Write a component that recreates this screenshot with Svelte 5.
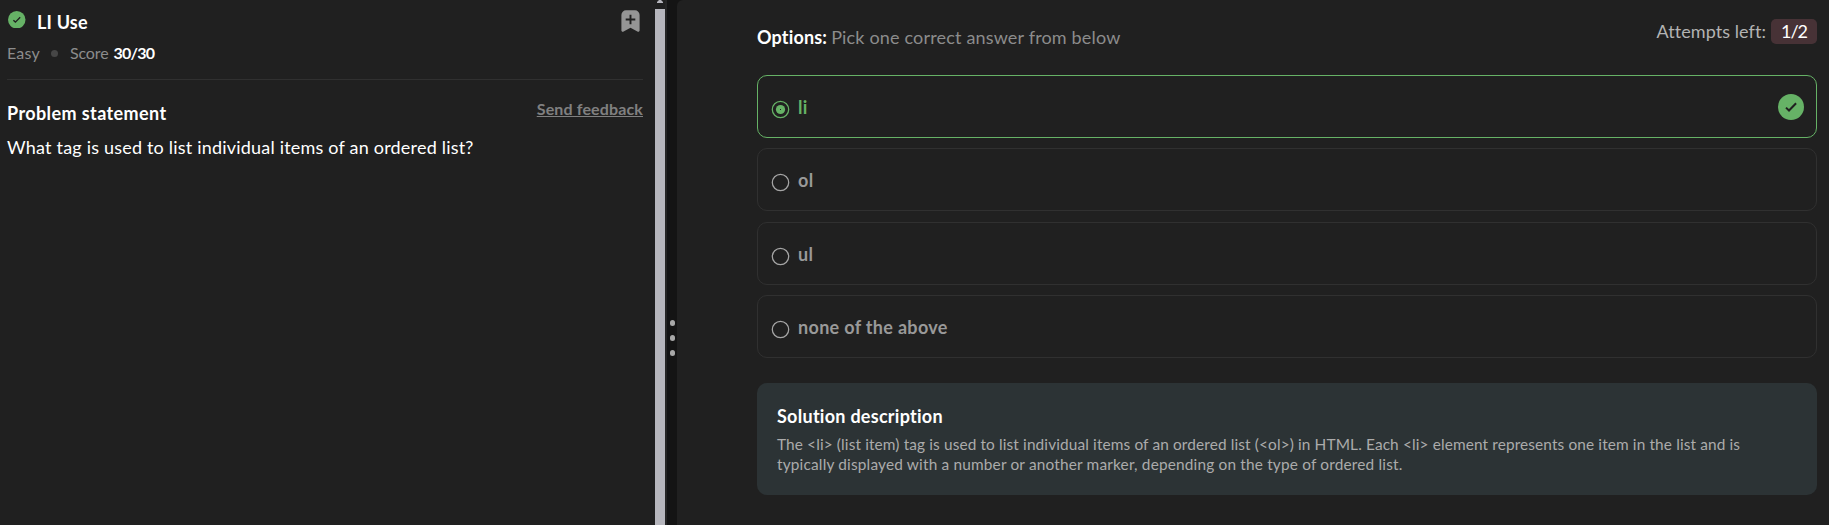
<script>
  const options = ['li', 'ol', 'ul', 'none of the above'];
  let selected = $state(0);
</script>

{#snippet check(size)}
  <svg class="check" width={size} height={size} viewBox="0 0 26 26" aria-hidden="true">
    <circle cx="13" cy="13" r="13" fill="#66b266" />
    <path d="M8 13.6l3 2.900L18.100 9.300" fill="none" stroke="#202020" stroke-width="2" />
  </svg>
{/snippet}

<div class="page">
  <section class="problem">
    <header>
      <div class="title-row">
        <span class="status">{@render check(17.5)}</span>
        <h1>LI Use</h1>
        <svg class="bookmark" width="19" height="23" viewBox="0 0 19 23" aria-label="Bookmark">
          <path d="M5 0.3h9a4.6 4.6 0 0 1 4.6 4.6v15.400c0 1.400-1.200 1.900-2.200 1.200L9.500 17.700l-6.900 3.800c-1 .7-2.200.2-2.200-1.200V4.900a4.600 4.600 0 0 1 4.600-4.600z" fill="#959595" />
          <path d="M9.500 4.700v9.600M4.700 9.500h9.600" stroke="#202020" stroke-width="1.900" />
        </svg>
      </div>
      <div class="meta">
        <span class="easy">Easy</span><i></i><span class="score">Score</span><b>30/30</b>
      </div>
    </header>
    <div class="statement-row">
      <h2>Problem statement</h2>
      <a href="#feedback">Send feedback</a>
    </div>
    <p>What tag is used to list individual items of an ordered list?</p>
  </section>

  <div class="scrollbar">
    <svg width="6" height="3" viewBox="0 0 6 3" aria-hidden="true"><path d="M2 0h2l2 2v1H0V2z" fill="#b6b6bd" /></svg>
    <div class="thumb"></div>
  </div>

  <div class="divider"><i></i><i></i><i></i></div>

  <section class="answers">
    <div class="top">
      <div class="prompt"><b>Options:</b><span>Pick one correct answer from below</span></div>
      <div class="attempts"><span>Attempts left:</span><em><span>1/2</span></em></div>
    </div>
    <div class="options">
      {#each options as option, i}
        <button class:selected={i === selected} onclick={() => (selected = i)}>
          <svg class="radio" width="19" height="19" viewBox="0 0 19 19" aria-hidden="true">
            <circle cx="9.500" cy="9.500" r="8.200" fill="none" stroke="currentColor" stroke-width="1.250" />
            {#if i === selected}<circle cx="9.500" cy="9.500" r="4.600" fill="currentColor" /><rect x="9" y="9" width="1" height="1" fill="#202020" />{/if}
          </svg>
          <span class="label">{option}</span>
          {#if i === selected}<span class="mark">{@render check(26)}</span>{/if}
        </button>
      {/each}
    </div>
    <article>
      <h2>Solution description</h2>
      <p>The &lt;li&gt; (list item) tag is used to list individual items of an ordered list (&lt;ol&gt;) in HTML. Each &lt;li&gt; element represents one item in the list and is<br /><span>typically displayed with a number or another marker, depending on the type of ordered list.</span></p>
    </article>
  </section>
</div>

<style>
  :global(body) { background: #141414; }
  .page { display: flex; height: 525px; overflow: hidden; background: #141414; color: #fff; font-family: Lato, "Open Sans", sans-serif; font-size: 18px; line-height: 24px; }
  h1, h2, p { margin: 0; font-size: 18px; line-height: 24px; }
  svg { display: block; }
  .problem { box-sizing: border-box; width: 655px; padding: 9px 12px 0 7px; background: #202020; }
  header { box-sizing: border-box; height: 71px; border-bottom: 1px solid #303030; }
  .title-row { display: flex; align-items: flex-start; }
  .status { width: 30px; padding: 1.500px 0 0 1px; box-sizing: border-box; }
  h1 { flex: 1; padding-top: 1px; letter-spacing: .2px; }
  .bookmark { margin: 1px 3px 0 0; }
  .meta { display: flex; align-items: center; margin-top: 9px; font-size: 16px; line-height: 20px; color: #8c8c8c; }
  .easy { letter-spacing: .2px; }
  .meta i { width: 7px; height: 7px; margin: 1px 11.500px 0 11.500px; border-radius: 50%; background: #464646; }
  .score { letter-spacing: -.1px; }
  .meta b { margin-left: 5px; color: #fff; letter-spacing: -.8px; }
  .statement-row { display: flex; justify-content: space-between; height: 24px; margin-top: 21px; }
  .statement-row h2 { letter-spacing: .4px; }
  .statement-row a { margin-top: -2px; font-size: 16px; line-height: 20px; font-weight: 700; letter-spacing: .14px; color: #808080; text-decoration: underline; text-decoration-thickness: 1px; text-underline-offset: 1px; text-decoration-skip-ink: none; }
  .problem p { margin-top: 10px; letter-spacing: .2px; }
  .scrollbar { width: 12px; background: linear-gradient(90deg, #202020 10px, #252525 10px); }
  .scrollbar svg { margin-left: 2px; }
  .thumb { width: 10px; height: 516px; margin-top: 6px; background: #b6b6bd; }
  .divider { display: flex; flex-direction: column; align-items: center; justify-content: center; gap: 9.500px; width: 10px; padding: 151px 0 0 1px; box-sizing: border-box; }
  .divider i { width: 5.500px; height: 5.500px; border-radius: 50%; background: #a8a8a8; }
  .answers { flex: 1; padding: 0 12px 0 80px; border-top-left-radius: 6px; background: #202020; }
  .top { display: flex; justify-content: space-between; height: 75px; }
  .prompt { display: flex; gap: 4px; margin-top: 25px; color: #8c8c8c; letter-spacing: .17px; }
  .prompt b { color: #fff; }
  .attempts { display: flex; gap: 5px; height: 25px; margin-top: 19px; color: #b3b3b3; letter-spacing: .06px; }
  .attempts em { width: 46px; border-radius: 5px; background: #473236; color: #fff; font-style: normal; text-align: center; letter-spacing: -1px; }
  .options { display: grid; gap: 10.400px; }
  button { box-sizing: border-box; display: flex; align-items: flex-start; width: 100%; height: 63px; padding: 18px 12px 0 13px; border: 1px solid #303030; border-radius: 10px; background: none; color: #999; font: 700 18px/24px Lato, sans-serif; letter-spacing: .32px; text-align: left; }
  .radio { margin: 5.800px 8px 0 0; color: #a6a6a6; }
  .label { flex: 1; padding-top: 1px; }
  .selected, .selected .radio { border-color: #66b266; color: #66b266; }
  article { height: 112px; margin-top: 24.800px; padding: 21px 20px 0; box-sizing: border-box; border-radius: 10px; background: #2c3335; }
  article h2 { letter-spacing: .27px; }
  article p { margin-top: 6px; font-size: 15.400px; line-height: 20px; letter-spacing: .125px; white-space: nowrap; color: #ababab; }
  article p span { letter-spacing: .175px; }
</style>
